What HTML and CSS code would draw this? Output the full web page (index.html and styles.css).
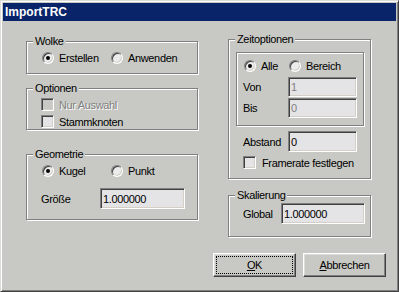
FILE: index.html
```html
<!DOCTYPE html>
<html lang="de">
	<head>
		<meta charset="UTF-8">
		<title>ImportTRC</title>
		<link rel="stylesheet" href="styles.css">
	</head>
	<body>
		<div class="window">
			<div class="titlebar">ImportTRC</div>
			<div class="main">
				<div class="col">
					<div class="group wolke">
						<span class="legend">Wolke</span>
						<div class="radios">
							<label class="opt w69"><i class="radio on"></i>Erstellen</label>
							<label class="opt"><i class="radio"></i>Anwenden</label>
						</div>
					</div>
					<div class="group optionen">
						<span class="legend">Optionen</span>
						<label class="opt disabled"><i class="check"></i>Nur Auswahl</label>
						<label class="opt row2"><i class="check"></i>Stammknoten</label>
					</div>
					<div class="group geometrie">
						<span class="legend">Geometrie</span>
						<div class="radios">
							<label class="opt w69"><i class="radio on"></i>Kugel</label>
							<label class="opt"><i class="radio"></i>Punkt</label>
						</div>
						<div class="field groesse">
							<span class="lbl w59">Größe</span>
							<span class="input w85">1.000000</span>
						</div>
					</div>
				</div>
				<div class="col">
					<div class="group zeit">
						<span class="legend">Zeitoptionen</span>
						<div class="group inner">
							<div class="radios">
								<label class="opt w45"><i class="radio on"></i>Alle</label>
								<label class="opt"><i class="radio"></i>Bereich</label>
							</div>
							<div class="field von">
								<span class="lbl w45">Von</span>
								<span class="input w69 h20 grey">1</span>
							</div>
							<div class="field bis">
								<span class="lbl w45">Bis</span>
								<span class="input w69 h20 grey">0</span>
							</div>
						</div>
						<div class="field abstand">
							<span class="lbl w45">Abstand</span>
							<span class="input w69">0</span>
						</div>
						<label class="opt framerate"><i class="check"></i>Framerate festlegen</label>
					</div>
					<div class="group skalierung">
						<span class="legend">Skalierung</span>
						<div class="field">
							<span class="lbl w38">Global</span>
							<span class="input w84">1.000000</span>
						</div>
					</div>
				</div>
			</div>
			<div class="buttons">
				<a class="btn default" href="javascript:;"><u>O</u>K</a>
				<a class="btn" href="javascript:;"><u>A</u>bbrechen</a>
			</div>
		</div>
	</body>
</html>
```

FILE: styles.css
```css
* {
	margin: 0;
	padding: 0;
}

body {
	font-family: "Liberation Sans", Arial, sans-serif;
	font-size: 11px;
	line-height: 12px;
	letter-spacing: -0.35px;
	color: #000;
	background: #c8c9c4;
}

.window {
	box-sizing: border-box;
	width: 399px;
	height: 292px;
	padding: 2px;
	background: #c8c9c4;
	border: 1px solid;
	border-color: #dcdcd8 #404040 #404040 #dcdcd8;
	box-shadow: inset 1px 1px 0 #fff, inset -1px -1px 0 #808080;
}

.titlebar {
	height: 18px;
	line-height: 18px;
	padding-left: 2px;
	background: #0a246a;
	color: #fff;
	font-size: 12px;
	font-weight: bold;
	letter-spacing: 0;
}

.main {
	display: grid;
	grid-template-columns: 172px 143px;
	column-gap: 30px;
	align-items: start;
	padding: 18px 0 0 23px;
}

.col {
	display: flex;
	flex-direction: column;
}

/* geätzter Rahmen */
.group {
	position: relative;
	box-sizing: border-box;
	border: 1px solid #808080;
	box-shadow: 1px 1px 0 #fff, inset 1px 1px 0 #fff;
}

.legend {
	position: absolute;
	top: -7px;
	left: 6px;
	padding: 0 2px;
	background: #c8c9c4;
}

.wolke {
	margin-top: 2px;
	height: 33px;
	padding: 10px 0 0 15px;
}

.optionen {
	margin-top: 14px;
	height: 42px;
	padding: 9px 0 0 14px;
}

.optionen .row2 {
	margin-top: 4px;
}

.geometrie {
	margin-top: 24px;
	height: 66px;
	padding: 10px 0 0 15px;
}

.zeit {
	height: 140px;
	padding: 12px 0 0 7px;
}

.inner {
	width: 128px;
	height: 74px;
	padding: 7px 0 0 7px;
}

.skalierung {
	margin-top: 16px;
	height: 42px;
	padding: 7px 0 0 14px;
}

.radios {
	display: flex;
}

.opt {
	display: flex;
	align-items: center;
	gap: 5px;
	white-space: nowrap;
}

.w69 { width: 69px; }
.w45 { width: 45px; }
.w59 { width: 59px; }
.w38 { width: 38px; }
.w84 { width: 84px; }
.w85 { width: 85px; }

.disabled {
	color: #808080;
	text-shadow: 1px 1px 0 #fff;
}

.radio {
	position: relative;
	box-sizing: border-box;
	width: 12px;
	height: 12px;
	border-radius: 50%;
	border: 1px solid;
	border-color: #808080 #fff #fff #808080;
	box-shadow: inset 1px 1px 0 #404040, inset -1px -1px 0 #d4d0c8;
	background: #ececec;
}

.radio.on::after {
	content: "";
	position: absolute;
	left: 3px;
	top: 3px;
	width: 4px;
	height: 4px;
	border-radius: 50%;
	background: #000;
}

.check {
	box-sizing: border-box;
	width: 13px;
	height: 13px;
	border: 1px solid;
	border-color: #808080 #fff #fff #808080;
	box-shadow: inset 1px 1px 0 #404040, inset -1px -1px 0 #d4d0c8;
	background: #e4e3e6;
}

.disabled .check {
	background: #c8c9c4;
}

.field {
	display: flex;
	align-items: center;
}

.groesse {
	margin: 11px 0 0 -1px;
}

.von {
	margin: 5px 0 0 -1px;
}

.bis {
	margin: 1px 0 0 -1px;
}

.abstand {
	margin: 5px 0 0 7px;
}

.framerate {
	margin: 4px 0 0 7px;
	gap: 6px;
}

.input {
	box-sizing: border-box;
	display: flex;
	align-items: center;
	height: 21px;
	padding: 0 2px;
	border: 1px solid;
	border-color: #808080 #fff #fff #808080;
	box-shadow: inset 1px 1px 0 #404040, inset -1px -1px 0 #d4d0c8;
	background: #e4e3e6;
}

.h20 {
	height: 20px;
}

.grey {
	color: #808080;
}

.buttons {
	display: flex;
	justify-content: flex-end;
	gap: 7px;
	margin-top: 16px;
	padding-right: 10px;
}

.btn {
	box-sizing: border-box;
	display: flex;
	align-items: center;
	justify-content: center;
	width: 83px;
	height: 24px;
	color: #000;
	text-decoration: none;
	border: 1px solid;
	border-color: #fff #404040 #404040 #fff;
	box-shadow: inset -1px -1px 0 #808080, inset 1px 1px 0 #dcdcd8;
	background: #c8c9c4;
}

.btn.default {
	outline: 1px dotted #000;
	outline-offset: -4px;
}
```
